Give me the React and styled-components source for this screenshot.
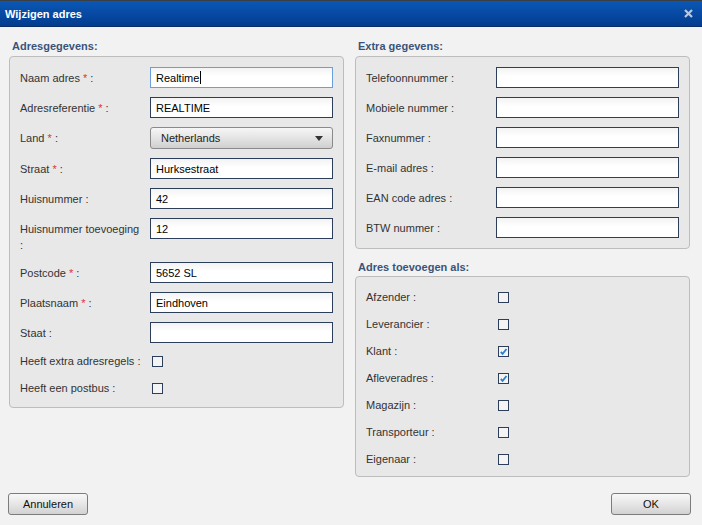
import styled, { createGlobalStyle } from "styled-components";

const GlobalStyle = createGlobalStyle`
  html, body {
    margin: 0;
    padding: 0;
    background: #f2f2f2;
    font-family: "Liberation Sans", Arial, sans-serif;
    font-size: 11px;
    color: #333;
  }
`;

const Dialog = styled.div`
  width: 702px;
  height: 525px;
  display: flex;
  flex-direction: column;
  background: #f2f2f2;
  overflow: hidden;
`;

const TitleBar = styled.div`
  height: 25px;
  flex: none;
  display: flex;
  align-items: center;
  justify-content: space-between;
  padding: 0 9px 0 5px;
  border-top: 1px solid #3a3f47;
  border-bottom: 1px solid #0b2e66;
  background: linear-gradient(#0a58b5, #0647a0 60%, #033c8e);
  color: #fff;
  font-weight: bold;
  font-size: 11px;
`;

const CloseIcon = styled.svg`
  width: 9px;
  height: 9px;
  display: block;
`;

const Content = styled.div`
  display: grid;
  grid-template-columns: 335px 335px;
  column-gap: 11px;
  padding: 11px 12px 0 9px;
  align-items: start;
`;

const Column = styled.div`
  display: flex;
  flex-direction: column;
`;

const Heading = styled.div`
  font-weight: bold;
  color: #3a5479;
  line-height: 16px;
  padding-left: 3px;
  margin: ${(p) => (p.$spaced ? "10px" : "0")} 0 ${(p) => (p.$spaced ? "1px" : "2px")};
`;

const Box = styled.div`
  display: grid;
  grid-template-columns: 130px 183px;
  row-gap: 9px;
  padding: ${(p) => (p.$loose ? "11px 10px 8px" : "10px 10px")};
  background: #e8e8e8;
  border: 1px solid #bdbdbd;
  border-radius: 4px;
`;

const Label = styled.div`
  line-height: 16px;
  padding-top: ${(p) => (p.$check ? 1 : 3)}px;
  padding-right: 8px;
  color: #333;
`;

const Star = styled.span`
  color: #e53030;
`;

const Field = styled.div`
  height: 21px;
  box-sizing: border-box;
  display: flex;
  align-items: center;
  padding: 0 5px;
  border: 1px solid ${(p) => (p.$focus ? "#6a9fdc" : "#2c3e5a")};
  background: linear-gradient(#f3f3f3, #ffffff 45%, #ffffff);
  color: #000;
`;

const Caret = styled.span`
  width: 1px;
  height: 13px;
  background: #000;
  margin-left: 1px;
`;

const Select = styled.div`
  height: 22px;
  box-sizing: border-box;
  display: flex;
  align-items: center;
  justify-content: space-between;
  padding: 0 9px 0 10px;
  border: 1px solid #8a8a8a;
  border-radius: 3px;
  background: linear-gradient(#f6f6f6, #e4e4e4 50%, #cfcfcf);
  color: #222;
`;

const Arrow = styled.span`
  width: 0;
  height: 0;
  border-left: 4px solid transparent;
  border-right: 4px solid transparent;
  border-top: 5px solid #333;
`;

const CheckCell = styled.div`
  height: 18px;
  display: flex;
  align-items: center;
  padding-left: 2px;
`;

const CheckBox = styled.span`
  width: 11px;
  height: 11px;
  box-sizing: border-box;
  border: 1px solid #2c3e5a;
  background: #f4f4f4;
  display: flex;
  align-items: center;
  justify-content: center;
`;

const Footer = styled.div`
  margin-top: auto;
  display: flex;
  justify-content: space-between;
  padding: 0 11px 10px 8px;
`;

const Button = styled.button`
  width: 80px;
  height: 22px;
  padding: 0;
  border: 1px solid #7c7c7c;
  border-radius: 3px;
  background: linear-gradient(#f8f8f8, #e6e6e6 50%, #d2d2d2);
  font-family: "Liberation Sans", Arial, sans-serif;
  font-size: 11px;
  color: #111;
`;

function Check({ checked }) {
  return (
    <CheckCell>
      <CheckBox>
        {checked && (
          <svg width="9" height="9" viewBox="0 0 9 9">
            <path d="M1.8 5 L3.6 6.8 L7.5 2" fill="none" stroke="#2a80d8" strokeWidth="1.8" />
          </svg>
        )}
      </CheckBox>
    </CheckCell>
  );
}

function Req({ children }) {
  return (
    <Label>
      {children} <Star>*</Star> :
    </Label>
  );
}

const extra = ["Telefoonnummer", "Mobiele nummer", "Faxnummer", "E-mail adres", "EAN code adres", "BTW nummer"];

const roles = [
  ["Afzender", false],
  ["Leverancier", false],
  ["Klant", true],
  ["Afleveradres", true],
  ["Magazijn", false],
  ["Transporteur", false],
  ["Eigenaar", false],
];

export default function App() {
  return (
    <Dialog>
      <GlobalStyle />
      <TitleBar>
        <span>Wijzigen adres</span>
        <CloseIcon viewBox="0 0 9 9">
          <path d="M1 1 L8 8 M8 1 L1 8" stroke="#b9c9e2" strokeWidth="2.2" />
        </CloseIcon>
      </TitleBar>

      <Content>
        <Column>
          <Heading>Adresgegevens:</Heading>
          <Box>
            <Req>Naam adres</Req>
            <Field $focus>
              Realtime
              <Caret />
            </Field>
            <Req>Adresreferentie</Req>
            <Field>REALTIME</Field>
            <Req>Land</Req>
            <Select>
              Netherlands
              <Arrow />
            </Select>
            <Req>Straat</Req>
            <Field>Hurksestraat</Field>
            <Label>Huisnummer :</Label>
            <Field>42</Field>
            <Label>Huisnummer toevoeging :</Label>
            <Field>12</Field>
            <Req>Postcode</Req>
            <Field>5652 SL</Field>
            <Req>Plaatsnaam</Req>
            <Field>Eindhoven</Field>
            <Label>Staat :</Label>
            <Field />
            <Label $check>Heeft extra adresregels :</Label>
            <Check />
            <Label $check>Heeft een postbus :</Label>
            <Check />
          </Box>
        </Column>

        <Column>
          <Heading>Extra gegevens:</Heading>
          <Box>
            {extra.map((name) => [
              <Label key={name + "l"}>{name} :</Label>,
              <Field key={name + "f"} />,
            ])}
          </Box>
          <Heading $spaced>Adres toevoegen als:</Heading>
          <Box $loose>
            {roles.map(([name, checked]) => [
              <Label $check key={name + "l"}>{name} :</Label>,
              <Check key={name + "c"} checked={checked} />,
            ])}
          </Box>
        </Column>
      </Content>

      <Footer>
        <Button>Annuleren</Button>
        <Button>OK</Button>
      </Footer>
    </Dialog>
  );
}
